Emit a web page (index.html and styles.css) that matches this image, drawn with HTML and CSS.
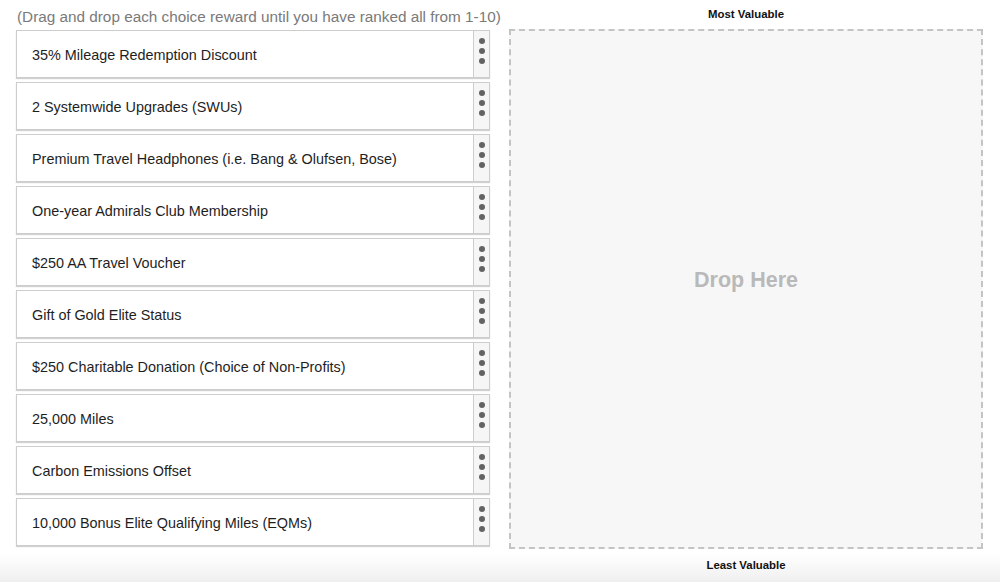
FILE: index.html
```html
<!DOCTYPE html>
<html>
<head>
<meta charset="utf-8">
<link rel="stylesheet" href="styles.css">
</head>
<body>
<div class="page">
  <div class="left">
    <div class="instructions">(Drag and drop each choice reward until you have ranked all from 1-10)</div>
    <div class="list">
      <div class="card"><div class="label">35% Mileage Redemption Discount</div><div class="handle"><span></span><span></span><span></span></div></div>
      <div class="card"><div class="label">2 Systemwide Upgrades (SWUs)</div><div class="handle"><span></span><span></span><span></span></div></div>
      <div class="card"><div class="label">Premium Travel Headphones (i.e. Bang &amp; Olufsen, Bose)</div><div class="handle"><span></span><span></span><span></span></div></div>
      <div class="card"><div class="label">One-year Admirals Club Membership</div><div class="handle"><span></span><span></span><span></span></div></div>
      <div class="card"><div class="label">$250 AA Travel Voucher</div><div class="handle"><span></span><span></span><span></span></div></div>
      <div class="card"><div class="label">Gift of Gold Elite Status</div><div class="handle"><span></span><span></span><span></span></div></div>
      <div class="card"><div class="label">$250 Charitable Donation (Choice of Non-Profits)</div><div class="handle"><span></span><span></span><span></span></div></div>
      <div class="card"><div class="label">25,000 Miles</div><div class="handle"><span></span><span></span><span></span></div></div>
      <div class="card"><div class="label">Carbon Emissions Offset</div><div class="handle"><span></span><span></span><span></span></div></div>
      <div class="card"><div class="label">10,000 Bonus Elite Qualifying Miles (EQMs)</div><div class="handle"><span></span><span></span><span></span></div></div>
    </div>
  </div>
  <div class="right">
    <div class="cap top">Most Valuable</div>
    <div class="drop">Drop Here</div>
    <div class="cap bottom">Least Valuable</div>
  </div>
</div>
</body>
</html>
```

FILE: styles.css
```css
html, body {
  margin: 0;
  padding: 0;
}
body {
  width: 1000px;
  height: 582px;
  overflow: hidden;
  font-family: "Liberation Sans", Arial, sans-serif;
  background: linear-gradient(to bottom, #ffffff 0px, #ffffff 554px, #efefef 582px);
}
.page {
  display: flex;
  padding: 0 0 0 16px;
}
.left {
  width: 474px;
}
.instructions {
  color: #7a7a7a;
  font-size: 15.3px;
  height: 30px;
  line-height: 34px;
  padding-left: 1px;
  white-space: nowrap;
}
.list {
  display: flex;
  flex-direction: column;
  gap: 4px;
}
.card {
  display: flex;
  height: 46px;
  border: 1px solid #cdcdcd;
  background: #fff;
  box-shadow: 0 1px 1px rgba(0,0,0,0.18);
}
.label {
  flex: 1;
  padding-left: 15px;
  display: flex;
  align-items: center;
  font-size: 14.4px;
  color: #1e1e1e;
  padding-top: 2px;
}
.handle {
  width: 15px;
  border-left: 1px solid #cdcdcd;
  background: #f6f6f6;
  display: flex;
  flex-direction: column;
  align-items: center;
  gap: 4px;
  padding-top: 7px;
}
.handle span {
  width: 6px;
  height: 6px;
  border-radius: 50%;
  background: #636363;
}
.right {
  margin-left: 19px;
  width: 474px;
  display: flex;
  flex-direction: column;
  align-items: stretch;
}
.cap {
  font-size: 11.4px;
  font-weight: bold;
  color: #111;
  text-align: center;
}
.cap.top {
  height: 29px;
  line-height: 28px;
}
.cap.bottom {
  line-height: 32px;
}
.drop {
  border: 2px dashed #c4c4c4;
  background: #f7f7f7;
  display: flex;
  align-items: center;
  justify-content: center;
  color: #b9b9b9;
  font-weight: bold;
  font-size: 21.5px;
  padding-bottom: 18px;
  box-sizing: border-box;
  height: 520px;
}
```
